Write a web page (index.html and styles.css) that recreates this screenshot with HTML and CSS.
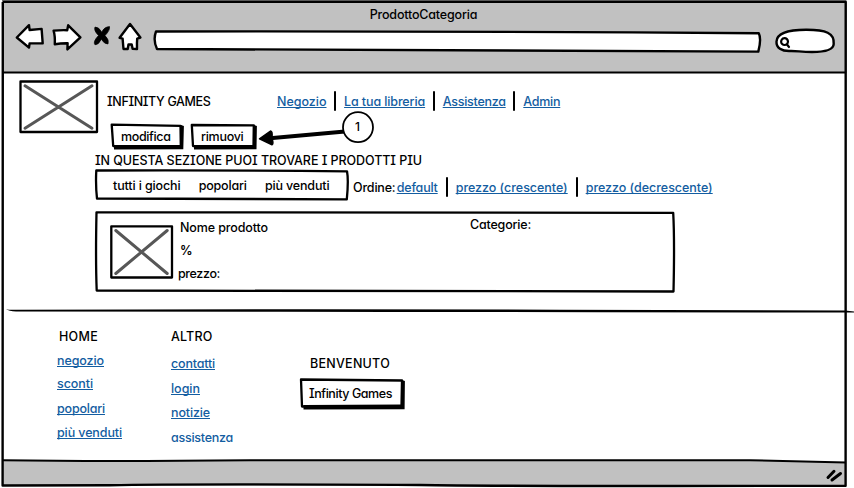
FILE: index.html
```html
<!DOCTYPE html>
<html lang="it">
<head>
<meta charset="utf-8">
<title>ProdottoCategoria</title>
<link rel="stylesheet" href="styles.css">
</head>
<body>
<div class="window">
  <header class="chrome">
    <h1 class="title"><span class="t" data-w="107.5">ProdottoCategoria</span></h1>
    <div class="toolbar">
      <svg class="ink back" viewBox="14 22 32 34" width="32" height="34"><path d="M16.8 37.5 L29 25.2 L29.6 30 L41.6 28.9 L42.7 43.4 L29.6 43.4 L29 47.6 Z"/></svg>
      <svg class="ink forward" viewBox="51 22 33 34" width="33" height="34"><path d="M53.6 30.6 Q60 30 67.2 30.2 L68.2 25.3 L80.4 37.3 L67.4 49.4 L67.6 43.3 Q61 43.2 54.8 44.3 Q55.2 36 53.6 30.6 Z"/></svg>
      <svg class="stop" viewBox="91 22 22 34" width="22" height="34"><path d="M95 27 Q99 27 101.8 32.2 Q104 27 109.5 26.6 Q110.3 30 105 35.6 Q109.5 40 108 44 Q104.5 44.3 101.3 39.3 Q98.500 45 95 44.800 Q92.500 42 98.500 35.500 Q93.500 30.500 95 27 Z"/></svg>
      <svg class="ink home" viewBox="117 22 27 34" width="27" height="34"><path d="M130 24 L140.400 37.500 L137.200 38.600 Q136.800 43 137 49 L132.600 48.700 L131.700 44.500 L128.500 44.500 L127.700 49 L123.500 49 L122.600 38.600 L119.600 37.800 Z"/></svg>
      <svg class="ink address" viewBox="151 22 613 34" width="613" height="34"><path d="M156 31.500 Q450 31 758.800 33.300 Q761.600 39 758.300 51.600 Q450 51 157 49 Q152.800 40 156 31.500 Z"/></svg>
      <svg class="ink search" viewBox="773 22 64 34" width="64" height="34"><path d="M776.500 41.500 C777 32 790 29.800 806 29.800 C826 29.700 834.600 33 833.700 44 C833.500 50.500 824 52 812 52 C800 52 797 50.600 789 51 C782 51 776 48 776.500 41.500 Z"/><path class="lens" d="M784.500 38.200 A3.400 3.400 0 1 0 784.600 45 A3.400 3.400 0 1 0 784.500 38.200 M786.800 44.300 L789 47"/></svg>
    </div>
  </header>

  <main class="page">
    <section class="top">
      <svg class="picture" viewBox="18 79 81 56" width="81" height="56"><path class="cross" d="M25 85.800 L92 128.200 M92 85.800 L25 128.200"/><path class="edge" d="M20.500 81.500 H97 V132 H20.500 Z"/></svg>
      <div class="masthead">
        <div class="brandline">
          <span class="t" data-w="103.500">INFINITY GAMES</span>
          <nav class="links menu">
            <a class="t" data-w="49.500">Negozio</a><i class="bar"></i><a class="t" data-w="81">La tua libreria</a><i class="bar"></i><a class="t" data-w="63">Assistenza</a><i class="bar"></i><a class="t" data-w="37">Admin</a>
          </nav>
        </div>
        <div class="actions">
          <div class="button modify">
            <svg class="sketch" viewBox="110 122 75 29" width="75" height="29"><path class="shade" d="M114 145 L180 145 L181 125 L183.900 126 L183.300 149.300 L114 149.500 Z"/><path class="edge" d="M111.700 124.700 L180.500 125.800 L180.800 146.200 L113.200 146 Z"/></svg>
            <span class="t" data-w="49.500">modifica</span>
          </div>
          <div class="button remove">
            <svg class="sketch" viewBox="190 122 69 29" width="69" height="29"><path class="shade" d="M194 145 L253 145 L254 125 L256.900 126 L256.500 149.300 L194 149.500 Z"/><path class="edge" d="M191.800 125 L253.800 125.300 L253.500 146.200 L193 146 Z"/></svg>
            <span class="t" data-w="42.500">rimuovi</span>
          </div>
        </div>
      </div>
      <svg class="callout" viewBox="254 108 124 42" width="124" height="42"><path class="shaft" d="M270 138.300 L345 131.500"/><path class="head" d="M259.500 138.800 L270.500 131 Q273 131.500 271.800 138 Q274 144 272 144.800 Z"/><circle cx="358" cy="127.200" r="15"/><text x="357.500" y="131">1</text></svg>
    </section>

    <section class="catalog">
      <h2 class="t" data-w="327">IN QUESTA SEZIONE PUOI TROVARE I PRODOTTI PIU</h2>
      <div class="filters">
        <div class="tabs">
          <svg class="sketch" viewBox="94 168 256 34" width="256" height="34"><path class="edge" d="M96.300 170.500 Q220 170 347 171.300 Q348.700 180 346.800 199.300 Q220 199 97 198.500 Q95.500 185 96.300 170.500 Z"/></svg>
          <span class="t" data-w="67.500">tutti i giochi</span><span class="t" data-w="48">popolari</span><span class="t" data-w="64.500">più venduti</span>
        </div>
        <span class="t order" data-w="42.500">Ordine:</span>
        <nav class="links sort">
          <a class="t" data-w="41">default</a><i class="bar"></i><a class="t" data-w="112">prezzo (crescente)</a><i class="bar"></i><a class="t" data-w="127">prezzo (decrescente)</a>
        </nav>
      </div>
      <article class="card">
        <svg class="sketch" viewBox="94 209 582 86" width="582" height="86"><path class="edge" d="M96.500 212.300 Q380 211.600 673.200 212.800 Q674.700 240 673.500 291.500 Q380 290.600 96.700 290.500 Q95.500 260 96.500 212.300 Z"/></svg>
        <svg class="picture" viewBox="109 224 65 56" width="65" height="56"><path class="cross" d="M115.800 230.500 L167.200 273.500 M167.200 230.500 L115.800 273.500"/><path class="edge" d="M111.300 226.300 H172 V277.500 H111.300 Z"/></svg>
        <div class="details">
          <span class="t name" data-w="88">Nome prodotto</span>
          <span class="t name percent" data-w="12">%</span>
          <span class="t" data-w="42">prezzo:</span>
        </div>
        <span class="t category" data-w="61">Categorie:</span>
      </article>
    </section>

    <svg class="divider" viewBox="0 306 854 10" width="854" height="10"><path d="M6 309.300 Q9 310 16 309.800 Q300 308.700 560 309.700 L845 310.600 L854 311.500 V312.400 L845 312.500 Q500 312 280 311.700 L16 311.500 Q9 311 6 309.300 Z"/></svg>

    <section class="sitemap">
      <div class="column shop">
        <span class="t heading" data-w="39">HOME</span>
        <a class="t" data-w="47">negozio</a><a class="t high" data-w="36">sconti</a><a class="t" data-w="48">popolari</a><a class="t" data-w="65">più venduti</a>
      </div>
      <div class="column other">
        <span class="t" data-w="41.500">ALTRO</span>
        <a class="t" data-w="44">contatti</a><a class="t" data-w="29">login</a><a class="t" data-w="39">notizie</a><a class="t plain" data-w="62">assistenza</a>
      </div>
      <div class="column welcome">
        <span class="t heading" data-w="80">BENVENUTO</span>
        <div class="button">
          <svg class="sketch" viewBox="299 377 107 34" width="107" height="34"><path class="shade" d="M303.500 405 L402 404.500 L402 380 L404.900 381 L404.600 409.300 L303.500 409.500 Z"/><path class="edge" d="M301 379.500 L402 380.500 L401.500 405.800 L302 406.500 Z"/></svg>
          <span class="t" data-w="83">Infinity Games</span>
        </div>
      </div>
    </section>
  </main>

  <footer class="status">
    <svg viewBox="0 458 854 30" width="854" height="30"><path class="fill" d="M3 460.500 Q60 461 250 460.200 L750 460.200 L846 462.600 V486 H3 Z"/><path class="line" d="M3 460.300 Q110 461.800 250 460.200 L750 460.200 L846 462.600"/><path class="grip" d="M828 477.500 L834 471.300 M832 480 L840.500 473.500"/></svg>
  </footer>

  <svg class="frame" viewBox="0 0 854 488" width="854" height="488"><path class="haze" d="M2 .8 H846"/><path d="M2.800 1.900 H845.700 Q846.300 250 845.600 485.800 Q500 486.300 420 485 Q180 483.700 110 485.300 L2.600 485.500 Q1.800 250 2.800 1.900"/><path class="thin" d="M2 72.600 H846"/></svg>
</div>
<script src="labels.js"></script>
</body>
</html>
```
FILE: styles.css
```css
* { box-sizing: border-box; }
body { margin: 0; background: #fff; color: #000; }
.window {
  position: relative;
  display: flex;
  flex-direction: column;
  width: 854px;
  height: 488px;
  overflow: hidden;
  font: 500 12.500px/18px Inter, "Noto Sans", sans-serif;
  font-feature-settings: "cv08", "cv11";
}
svg { display: block; flex: none; overflow: visible; }
h1, h2 { margin: 0; font: inherit; }
.t { display: block; flex: none; width: max-content; height: 16px; white-space: nowrap; }
a { color: #135da1; text-decoration: underline; text-decoration-thickness: 1px; text-underline-offset: 1px; text-decoration-skip-ink: none; }
a.plain { text-decoration: none; }

.chrome { height: 73px; margin: 0 7px 0 2px; padding-top: 6px; background: #c1c1c1; }
.title { display: flex; justify-content: center; padding-right: 2px; }
.toolbar { display: flex; padding-left: 12px; }
.forward { margin-left: 5px; }
.stop { margin-left: 7px; }
.stop path { stroke: #000; stroke-width: .7; }
.home { margin-left: 4px; }
.address { margin-left: 7px; }
.search { margin-left: 9px; }
.ink path { fill: #fff; stroke: #000; stroke-width: 2.4; stroke-linejoin: round; }
.ink .lens { fill: none; stroke-width: 2.2; stroke-linecap: round; }

.page { flex: 1; display: flex; flex-direction: column; }
.edge { fill: none; stroke: #000; stroke-width: 2.3; stroke-linejoin: round; }
.cross { fill: none; stroke: #575757; stroke-width: 3; stroke-linecap: round; }
.top { position: relative; display: flex; height: 79px; padding: 6px 0 0 18px; }
.masthead { margin-left: 8px; padding-top: 11px; }
.brandline { display: flex; align-items: center; height: 22px; }
.menu { margin-left: 66.500px; }
.links { display: flex; align-items: center; }
.bar { width: 2px; height: 20px; border-radius: 1px; background: #000; }
.menu .bar { margin: 0 7.800px; }
.actions { display: flex; gap: 5px; margin: 10px 0 0 3px; }
.button { position: relative; display: flex; height: 29px; padding-top: 6px; }
.modify { width: 75px; padding-left: 11px; }
.remove { width: 69px; padding-left: 11px; }
.sketch { position: absolute; left: 0; top: 0; }
.button .t, .tabs .t { position: relative; }
.shade { fill: #000; }
.callout { position: absolute; left: 254px; top: 35px; }
.callout circle { fill: #fff; stroke: #000; stroke-width: 1.800; }
.callout .shaft { stroke: #000; stroke-width: 4; }
.callout .head { fill: #000; stroke: #000; stroke-width: 1.500; stroke-linejoin: round; }
.callout text { font-size: 12px; text-anchor: middle; }

.catalog { display: flex; flex-direction: column; align-items: flex-start; padding-left: 94px; }
.catalog h2 { margin-left: 1px; }
.filters { display: flex; height: 34px; }
.tabs { position: relative; display: flex; gap: 18.200px; width: 256px; padding: 9px 0 0 19px; }
.order { margin: 11px 0 0 3px; }
.sort { height: 20px; margin: 9px 0 0 1.200px; }
.sort .bar { margin: 0 8px; }
.card { position: relative; display: flex; width: 582px; height: 86px; margin-top: 7px; padding-left: 15px; }
.card .picture { margin-top: 15px; }
.details { display: flex; flex-direction: column; gap: 7px; width: 292px; padding: 10px 0 0 4px; }
.details .name { margin-left: 2px; }
.percent { font-weight: 600; }
.category { margin: 7px 0 0 4px; }

.divider { margin-top: 11px; }
.sitemap { display: flex; padding-top: 12px; }
.column { display: flex; flex-direction: column; align-items: flex-start; gap: 8px; }
.shop { width: 114px; margin-left: 57px; }
.shop .heading { margin-left: 2px; }
.shop .high { margin: -1px 0 1px; }
.other { width: 128px; gap: 8.600px; }
.other > :first-child { margin-bottom: 2.700px; }
.welcome { gap: 6px; padding-top: 27px; }
.welcome .heading { margin-left: 11px; }
.welcome .button { width: 107px; height: 34px; padding: 8px 0 0 10px; }

.status { height: 30px; }
.status .fill { fill: #c1c1c1; }
.status .line { fill: none; stroke: #000; stroke-width: 2; }
.status .grip { stroke: #000; stroke-width: 3; stroke-linecap: round; }
.frame { position: absolute; left: 0; top: 0; pointer-events: none; }
.frame path { fill: none; stroke: #000; stroke-width: 2.400; stroke-linejoin: round; }
.frame .thin { stroke-width: 2; }
.frame .haze { stroke: #777; stroke-width: 1.500; }
.divider path { fill: #000; }
```
FILE: labels.js
```js
// Spreads each label's letters over the width set in data-w.
document.querySelectorAll('.t').forEach(function (el) {
  var target = parseFloat(el.dataset.w);
  var natural = el.getBoundingClientRect().width;
  el.style.letterSpacing = ((target - natural) / el.textContent.length) + 'px';
  el.style.width = target + 'px';
});
```
